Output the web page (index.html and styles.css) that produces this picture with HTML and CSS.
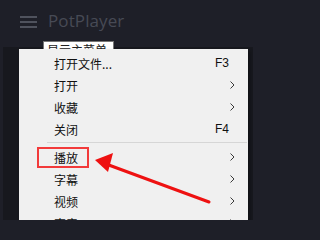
FILE: index.html
```html
<!DOCTYPE html>
<html>
<head>
<meta charset="utf-8">
<link rel="stylesheet" href="styles.css">
</head>
<body>
<div class="app">
  <header class="titlebar">
    <svg class="burger" width="17" height="12" viewBox="0 0 17 12">
      <rect x="0" y="0" width="17" height="2" fill="#4f525d"/>
      <rect x="0" y="5" width="17" height="2" fill="#4f525d"/>
      <rect x="0" y="10" width="17" height="2" fill="#4f525d"/>
    </svg>
    <span class="brand">PotPlayer</span>
  </header>
  <div class="video"></div>
</div>

<div class="tooltip"><span class="tiptext">显示主菜单</span></div>

<div class="menu">
  <div class="item"><span class="label">打开文件...</span><span class="key">F3</span></div>
  <div class="item"><span class="label">打开</span><svg class="chev" width="5" height="8" viewBox="0 0 5 8"><polyline points="0.5,0.5 4,4 0.5,7.5" fill="none" stroke="#3a3a3a" stroke-width="1"/></svg></div>
  <div class="item"><span class="label">收藏</span><svg class="chev" width="5" height="8" viewBox="0 0 5 8"><polyline points="0.5,0.5 4,4 0.5,7.5" fill="none" stroke="#3a3a3a" stroke-width="1"/></svg></div>
  <div class="item"><span class="label">关闭</span><span class="key">F4</span></div>
  <div class="sep"></div>
  <div class="item"><span class="label">播放</span><svg class="chev" width="5" height="8" viewBox="0 0 5 8"><polyline points="0.5,0.5 4,4 0.5,7.5" fill="none" stroke="#3a3a3a" stroke-width="1"/></svg></div>
  <div class="item"><span class="label">字幕</span><svg class="chev" width="5" height="8" viewBox="0 0 5 8"><polyline points="0.5,0.5 4,4 0.5,7.5" fill="none" stroke="#3a3a3a" stroke-width="1"/></svg></div>
  <div class="item"><span class="label">视频</span><svg class="chev" width="5" height="8" viewBox="0 0 5 8"><polyline points="0.5,0.5 4,4 0.5,7.5" fill="none" stroke="#3a3a3a" stroke-width="1"/></svg></div>
  <div class="item"><span class="label">声音</span><svg class="chev" width="5" height="8" viewBox="0 0 5 8"><polyline points="0.5,0.5 4,4 0.5,7.5" fill="none" stroke="#3a3a3a" stroke-width="1"/></svg></div>
</div>

<svg class="annot" width="253" height="220" viewBox="0 0 253 220">
  <rect x="38" y="148" width="50" height="19" fill="none" stroke="#f23a3a" stroke-width="2"/>
  <line x1="209" y1="202" x2="106" y2="164" stroke="#ee1111" stroke-width="3" stroke-linecap="round"/>
  <polygon points="95,160 113,153 108,172" fill="#ee1111"/>
</svg>
</body>
</html>
```
FILE: styles.css
```css
html, body {
  margin: 0;
  padding: 0;
}
body {
  width: 253px;
  height: 220px;
  overflow: hidden;
  background: #1e1f28;
  font-family: "Noto Sans CJK SC", "Noto Sans", sans-serif;
  position: relative;
}
.app {
  display: flex;
  flex-direction: column;
  height: 220px;
}
.titlebar {
  height: 47px;
  display: flex;
  align-items: flex-start;
  padding-left: 20px;
  box-sizing: border-box;
}
.burger {
  margin-top: 16px;
}
.brand {
  margin-left: 11px;
  margin-top: 9px;
  font-family: "Open Sans", "Noto Sans", sans-serif;
  font-size: 17px;
  line-height: 24px;
  color: #474a55;
  letter-spacing: 0.1px;
}
.video {
  flex: 1;
  margin-left: 3px;
  background: #17181e;
}
.tooltip {
  position: absolute;
  left: 43px;
  top: 41px;
  width: 71px;
  height: 8px;
  overflow: hidden;
  box-sizing: border-box;
  background: #ffffff;
  border: 1px solid #767676;
  border-bottom: none;
  padding-left: 3px;
  color: #222;
}
.tiptext {
  display: block;
  font-size: 12px;
  line-height: 16px;
}
.menu {
  position: absolute;
  left: 19px;
  top: 49px;
  width: 229px;
  height: 190px;
  background: #f0f0f0;
  padding-top: 3px;
  box-sizing: border-box;
  box-shadow: 2px 2px 3px rgba(0,0,0,0.35);
}
.item {
  height: 22px;
  display: flex;
  align-items: center;
  padding-left: 35px;
  padding-right: 13px;
  font-size: 12px;
  color: #111;
}
.label {
  flex: 1;
}
.key {
  font-family: "Liberation Sans", sans-serif;
  font-size: 12px;
  color: #111;
  margin-right: 6px;
}
.chev {
  display: block;
}
.sep {
  height: 1px;
  margin: 2px 1px 3px 28px;
  background: #d6d6d6;
}
.annot {
  position: absolute;
  left: 0;
  top: 0;
}
```
